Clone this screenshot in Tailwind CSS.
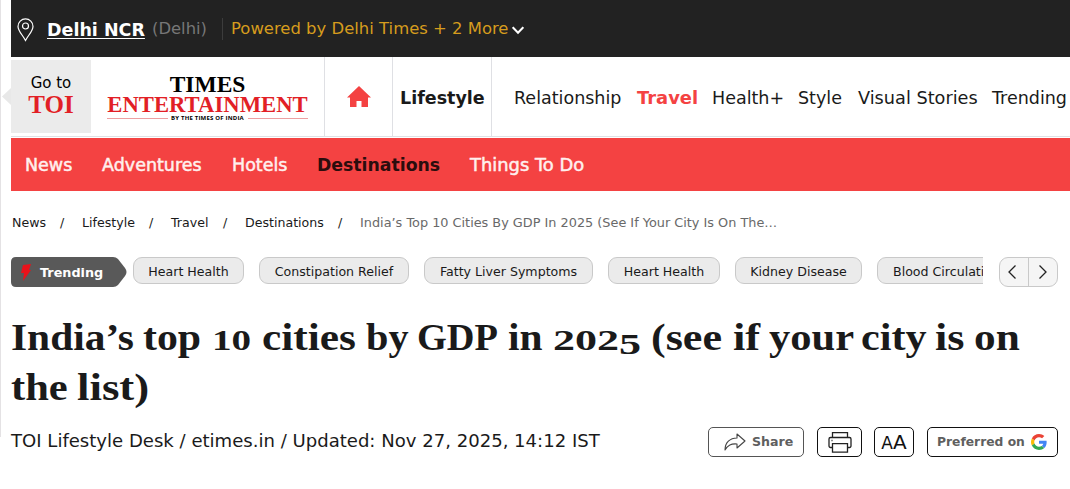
<!DOCTYPE html>
<html lang="en">
<head>
    <meta charset="UTF-8">
    <meta name="viewport" content="width=device-width, initial-scale=1.0">
    <title>India’s top 10 cities by GDP in 2025</title>
    <script src="https://cdn.jsdelivr.net/npm/@tailwindcss/browser@4"></script>
</head>
<body class="bg-white text-[#1a1a1a] font-['DejaVu_Sans',sans-serif] overflow-hidden">
<div class="relative w-[1070px] h-[489px] pl-[11px] overflow-hidden">
    <div class="absolute left-0 top-0 w-px h-[437px] bg-[#e4e2e4]"></div>
    <svg class="absolute left-[2px] top-[88px]" width="9" height="17"><path d="M9 0v17L0 8.500z" fill="#e8e8e8"/></svg>

    <!-- city bar -->
    <header class="h-[57px] bg-[#222] flex items-center whitespace-nowrap">
        <svg class="ml-[6px] w-[17px] shrink-0 mt-[2px]" width="17" height="24" viewBox="0 0 17 24" fill="none" stroke="#fff" stroke-width="1.2"><path d="M8.500 22.500C6 17.500 1 13 1 8.400a7.500 7.500 0 0 1 15 0c0 4.600-5 9.100-7.500 14.100z"/><circle cx="8.500" cy="8" r="3"/></svg>
        <a class="w-[105px] ml-[13px] text-[17.5px] font-bold text-white underline decoration-1 underline-offset-2 mt-[3px]">Delhi NCR</a>
        <span class="w-[70px] text-[16.400px] text-[#777] mt-[2px]">(Delhi)</span>
        <span class="w-px h-[22px] bg-[#3c3c3c]"></span>
        <span class="ml-[8px] w-[281px] text-[16.450px] text-[#d69c1d] mt-[2px]">Powered by Delhi Times + 2 More</span>
        <svg class="mt-[3px]" width="12" height="9" viewBox="0 0 12 9" fill="none" stroke="#fff" stroke-width="2"><path d="M.7 1.200L6 6.700l5.300-5.500"/></svg>
    </header>

    <!-- main nav -->
    <nav class="h-[80px] border-b border-[#dfe0e4] flex items-center whitespace-nowrap text-[17.500px]">
        <a class="w-[80px] h-[73px] bg-[#ebebeb] flex flex-col items-center pt-[13px] shrink-0">
            <span class="text-[15px] leading-[20px] text-black">Go to</span>
            <b class="font-['Liberation_Serif',serif] text-[25px] leading-[24px] text-[#e21f26]">TOI</b>
        </a>
        <a class="w-[234px] h-full border-r border-[#dfe0e4] flex flex-col items-center pt-[17px] font-['Liberation_Serif',serif] font-bold shrink-0">
            <span class="text-[23.500px] leading-[20px] text-black">TIMES</span>
            <span class="text-[22.700px] leading-[21px] text-[#e21f26]">ENTERTAINMENT</span>
            <span class="flex items-center w-[201px] h-[7px] font-['Open_Sans',sans-serif] text-[6px] leading-[7px] text-black">
                <i class="h-px flex-1 bg-[#eda0a2]"></i>
                <span class="w-[80px] text-center tracking-[0.2px]">BY THE TIMES OF INDIA</span>
                <i class="h-px flex-1 bg-[#eda0a2]"></i>
            </span>
        </a>
        <a class="w-[68px] h-full border-r border-[#dfe0e4] flex items-center justify-center shrink-0">
            <svg width="24" height="21" viewBox="0 0 24 21" fill="#f44242"><path d="M12 0L0 11.500h3V21h6.500v-6h5v6H21v-9.500h3z"/></svg>
        </a>
        <a class="w-[99px] h-full border-r border-[#dfe0e4] flex items-center pl-[7px] pt-[3px] font-bold shrink-0">Lifestyle</a>
        <a class="ml-[22px] mt-[3px] w-[123px] shrink-0">Relationship</a>
        <a class="mt-[3px] w-[75px] text-[17.900px] font-bold text-[#f44242] shrink-0">Travel</a>
        <a class="mt-[3px] w-[86px] shrink-0">Health+</a>
        <a class="mt-[3px] w-[60px] shrink-0">Style</a>
        <a class="mt-[3px] w-[134px] text-[17.700px] shrink-0">Visual Stories</a>
        <a class="mt-[3px] shrink-0">Trending</a>
    </nav>

    <!-- travel sections -->
    <nav class="mt-px h-[53px] bg-[#f44242] flex items-center whitespace-nowrap text-[17.500px] text-[#fff0ee] pl-[14px] pt-[2px]">
        <a class="w-[77px] [-webkit-text-stroke:0.5px]">News</a>
        <a class="w-[130px] [-webkit-text-stroke:0.5px]">Adventures</a>
        <a class="w-[85px] [-webkit-text-stroke:0.5px]">Hotels</a>
        <a class="w-[153px] text-[17.300px] font-bold text-[#2b0d0d]">Destinations</a>
        <a class="text-[17.900px] [-webkit-text-stroke:0.5px]">Things To Do</a>
    </nav>

    <div class="mt-[22px] h-[20px] flex items-center whitespace-nowrap text-[12.600px] pl-px">
        <a class="w-[48px]">News</a><span class="w-[22px]">/</span>
        <a class="w-[67px]">Lifestyle</a><span class="w-[22px]">/</span>
        <a class="w-[52px]">Travel</a><span class="w-[22px]">/</span>
        <a class="w-[93px]">Destinations</a><span class="w-[22px]">/</span>
        <span class="text-[12.850px] text-[#696969]">India’s Top 10 Cities By GDP In 2025 (See If Your City Is On The…</span>
    </div>

    <!-- trending topics -->
    <div class="mt-[24px] h-[30px] flex items-start whitespace-nowrap text-[12.600px]">
        <div class="relative w-[117px] h-[30px] shrink-0">
            <svg class="absolute inset-0" width="117" height="30"><path d="M5 0h97q3 0 5 2l7 9q3 4 0 8l-7 9q-2 2-5 2H5q-5 0-5-5V5q0-5 5-5z" fill="#595959"/><path d="M12 8l8-1-2 6h2l-8 11 1-8h-3z" fill="#e9121b"/></svg>
            <b class="relative block pl-[29px] leading-[31px] text-white text-[12.800px]">Trending</b>
        </div>
        <div class="ml-[5px] w-[850px] flex gap-[15px] overflow-hidden leading-[27px] text-center">
            <a class="w-[111px] h-[27px] shrink-0 border border-[#c9c9c9] bg-[#ebebeb] rounded-[9px]">Heart Health</a>
            <a class="w-[150px] h-[27px] shrink-0 border border-[#c9c9c9] bg-[#ebebeb] rounded-[9px]">Constipation Relief</a>
            <a class="w-[169px] h-[27px] shrink-0 border border-[#c9c9c9] bg-[#ebebeb] rounded-[9px]">Fatty Liver Symptoms</a>
            <a class="w-[112px] h-[27px] shrink-0 border border-[#c9c9c9] bg-[#ebebeb] rounded-[9px]">Heart Health</a>
            <a class="w-[127px] h-[27px] shrink-0 border border-[#c9c9c9] bg-[#ebebeb] rounded-[9px]">Kidney Disease</a>
            <a class="w-[145px] h-[27px] shrink-0 border border-[#c9c9c9] bg-[#ebebeb] rounded-[9px] text-left pl-[15px]">Blood Circulation</a>
        </div>
        <div class="ml-[16px] w-[59px] h-[30px] flex shrink-0 border border-[#c9c9c9] bg-[#f5f5f5] rounded-[9px]">
            <span class="w-[29px] border-r border-[#c9c9c9] flex items-center justify-center pr-[4px]"><svg width="8" height="14" viewBox="0 0 8 14" fill="none" stroke="#222" stroke-width="1.300"><path d="M7.500.5L1 7l6.500 6.500"/></svg></span>
            <span class="w-[28px] flex items-center justify-center"><svg width="8" height="14" viewBox="0 0 8 14" fill="none" stroke="#222" stroke-width="1.300"><path d="M.5.5L7 7 .5 13.500"/></svg></span>
        </div>
    </div>

    <!-- headline, digits are set at x-height -->
    <h1 class="mt-[25px] font-['Liberation_Serif',serif] font-bold text-[38px] leading-[50px] whitespace-nowrap">
        <span class="flex items-baseline h-[50px]">
            <span class="w-[132px] origin-left scale-x-[1.09]">India’s</span>
            <span class="w-[69px] origin-left scale-x-[1.1]">top</span>
            <span class="w-[50px] origin-left scale-x-[1.35] text-[29px]">10</span>
            <span class="w-[104px] origin-left scale-x-[1.14]">cities</span>
            <span class="w-[51px] origin-left scale-x-[1.06]">by</span>
            <span class="w-[91px] origin-left scale-x-[1.01]">GDP</span>
            <span class="w-[45px] origin-left scale-x-[1.09]">in</span>
            <span class="w-[98px] origin-left scale-x-[1.52] text-[29px]">202<span class="relative top-[4px]">5</span></span>
            <span class="w-[82px] origin-left scale-x-[1.16]">(see</span>
            <span class="w-[36px] origin-left scale-x-[1.17]">if</span>
            <span class="w-[92px] origin-left scale-x-[1.12]">your</span>
            <span class="w-[74px] origin-left scale-x-[1.11]">city</span>
            <span class="w-[39px] origin-left scale-x-[1.16]">is</span>
            <span class="origin-left scale-x-[1.14]">on</span>
        </span>
        <span class="flex items-baseline h-[50px]">
            <span class="w-[66px] origin-left scale-x-[1.12]">the</span>
            <span class="origin-left scale-x-[1.18]">list)</span>
        </span>
    </h1>

    <div class="mt-[15px] h-[30px] flex items-center whitespace-nowrap">
        <p class="w-[697px] text-[18.070px] -mt-[2px]">TOI Lifestyle Desk / etimes.in / Updated: Nov 27, 2025, 14:12 IST</p>
        <a class="w-[96px] h-[30px] border border-[#555] rounded-[5px] flex items-center pl-[15px] text-[12.600px] font-bold text-[#5f5f5f]">
            <svg class="mr-[6px]" width="22" height="18" viewBox="0 0 22 18" fill="none" stroke="#444" stroke-width="1.100" stroke-linejoin="round"><path d="M13 1l8 7-8 7v-4C7 10.500 4 12 1 17 1 9.500 6 5 13 5z"/></svg>
            Share
        </a>
        <a class="ml-[13px] w-[45px] h-[30px] border border-[#111] rounded-[5px] flex items-center justify-center">
            <svg width="24" height="21" viewBox="0 0 24 21" fill="none" stroke="#222" stroke-width="1.300"><path d="M4.500 5.500V.7h15v4.800M4.500 15.500h-2A1.500 1.500 0 0 1 1 14V7a1.500 1.500 0 0 1 1.500-1.500h19A1.500 1.500 0 0 1 23 7v7a1.500 1.500 0 0 1-1.500 1.500h-2"/><path d="M4.500 11.700h15v8.500h-15zM3.500 8.500h1"/></svg>
        </a>
        <a class="ml-[12px] w-[40px] h-[30px] border border-[#111] rounded-[5px] flex items-baseline justify-center text-[#111] leading-[28px]"><span class="text-[17px]">A</span><span class="text-[20px]">A</span></a>
        <a class="ml-[13px] w-[131px] h-[30px] border border-[#111] rounded-[5px] flex items-center pl-[9px] text-[12.300px] font-bold text-[#5f5f5f]">
            <span class="w-[94px]">Preferred on</span>
            <svg width="16" height="16" viewBox="0 0 48 48"><path fill="#EA4335" d="M24 9.500c3.540 0 6.710 1.220 9.210 3.600l6.850-6.850C35.900 2.380 30.470 0 24 0 14.620 0 6.510 5.380 2.560 13.220l7.980 6.190C12.430 13.720 17.740 9.500 24 9.500z"/><path fill="#4285F4" d="M46.980 24.550c0-1.570-.15-3.090-.38-4.550H24v9.020h12.940c-.58 2.960-2.260 5.480-4.780 7.180l7.730 6c4.510-4.180 7.090-10.360 7.090-17.650z"/><path fill="#FBBC05" d="M10.530 28.590c-.48-1.450-.76-2.990-.76-4.590s.27-3.140.76-4.590l-7.980-6.190C.92 16.460 0 20.120 0 24s.92 7.540 2.560 10.780z"/><path fill="#34A853" d="M24 48c6.480 0 11.930-2.130 15.890-5.810l-7.730-6c-2.150 1.450-4.920 2.300-8.160 2.300-6.260 0-11.570-4.220-13.470-9.910l-7.980 6.190C6.510 42.620 14.620 48 24 48z"/></svg>
        </a>
    </div>
</div>
</body>
</html>
